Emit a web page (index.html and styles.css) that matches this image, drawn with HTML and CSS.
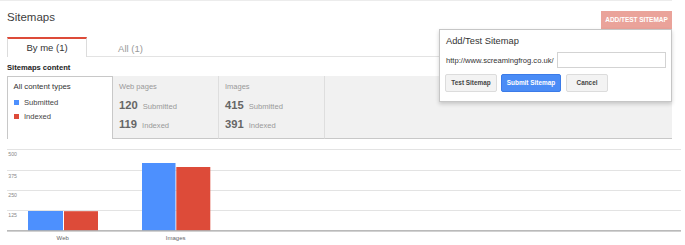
FILE: index.html
```html
<!DOCTYPE html>
<html>
<head>
<meta charset="utf-8">
<link rel="stylesheet" href="styles.css">
</head>
<body>
<div class="page">
  <div class="topline"></div>
  <div class="header">
    <div class="title">Sitemaps</div>
    <div class="add-btn">ADD/TEST SITEMAP</div>
  </div>
  <div class="tabs">
    <div class="tab active">By me (1)</div>
    <div class="tab">All (1)</div>
  </div>
  <div class="section-label">Sitemaps content</div>
  <div class="panel">
    <div class="cell cell-active">
      <div class="cell-label dark">All content types</div>
      <div class="legend"><span class="sq blue"></span>Submitted</div>
      <div class="legend"><span class="sq red"></span>Indexed</div>
    </div>
    <div class="cell cell-gray">
      <div class="cell-label">Web pages</div>
      <div class="stat first"><span class="num">120</span><span class="unit">Submitted</span></div>
      <div class="stat"><span class="num">119</span><span class="unit">Indexed</span></div>
    </div>
    <div class="cell cell-gray">
      <div class="cell-label">Images</div>
      <div class="stat first"><span class="num">415</span><span class="unit">Submitted</span></div>
      <div class="stat"><span class="num">391</span><span class="unit">Indexed</span></div>
    </div>
    <div class="cell-fill"></div>
  </div>
  <svg class="chart" width="685" height="105" viewBox="0 0 685 105">
    <g stroke="#e3e3e3" stroke-width="1">
      <line x1="7" y1="10.5" x2="681" y2="10.5"/>
      <line x1="7" y1="31.5" x2="681" y2="31.5"/>
      <line x1="7" y1="51.5" x2="681" y2="51.5"/>
      <line x1="7" y1="71.5" x2="681" y2="71.5"/>
    </g>
    <g class="axis-label">
      <text x="8.3" y="17.3">500</text>
      <text x="8.3" y="38.7">375</text>
      <text x="8.3" y="58.3">250</text>
      <text x="8.3" y="78.3">125</text>
    </g>
    <rect x="28" y="72" width="35" height="19.5" fill="#4d90fe"/>
    <rect x="64" y="72.2" width="34" height="19.3" fill="#dd4b39"/>
    <rect x="142" y="24" width="33.5" height="67.5" fill="#4d90fe"/>
    <rect x="176.3" y="28" width="34" height="63.5" fill="#dd4b39"/>
    <line x1="7" y1="91.9" x2="681" y2="91.9" stroke="#a3a3a3" stroke-width="1.4"/>
    <g class="cat-label">
      <text x="62.7" y="100.7" text-anchor="middle">Web</text>
      <text x="175.7" y="100.7" text-anchor="middle">Images</text>
    </g>
  </svg>

  <div class="popup">
    <div class="popup-title">Add/Test Sitemap</div>
    <div class="popup-row">
      <span class="url">http://www.screamingfrog.co.uk/</span>
      <input class="url-input" type="text">
    </div>
    <div class="popup-buttons">
      <div class="btn btn-gray btn-test">Test Sitemap</div>
      <div class="btn btn-blue">Submit Sitemap</div>
      <div class="btn btn-gray btn-cancel">Cancel</div>
    </div>
  </div>
</div>
</body>
</html>
```

FILE: styles.css
```css
* { box-sizing: border-box; }
html, body {
  margin: 0;
  padding: 0;
  background: #fff;
}
body {
  font-family: "Liberation Sans", Arial, sans-serif;
  color: #333;
  width: 685px;
  height: 245px;
  overflow: hidden;
}
.page {
  position: relative;
  width: 685px;
  height: 245px;
}
.topline {
  height: 1px;
  margin-right: 13px;
  background: #ececec;
}
.header {
  display: flex;
  justify-content: space-between;
  align-items: flex-start;
  padding: 9px 13px 0 7px;
  height: 28px;
}
.title {
  font-size: 11.5px;
  line-height: 14px;
  color: #404040;
}
.add-btn {
  margin-top: 1px;
  width: 71px;
  height: 18px;
  background: #eaa39a;
  color: #fff;
  font-weight: bold;
  font-size: 6.5px;
  line-height: 18px;
  text-align: center;
  letter-spacing: -0.05px;
}
.tabs {
  display: flex;
  margin: 8px 13px 0 7px;
  height: 20px;
  border-bottom: 1px solid #e3e3e3;
}
.tab {
  width: 87px;
  height: 19px;
  font-size: 9.5px;
  line-height: 19px;
  text-align: center;
  color: #999;
  border-top: 2px solid transparent;
}
.tab.active {
  width: 80px;
  height: 20px;
  margin-bottom: -1px;
  line-height: 17px;
  color: #333;
  background: #fff;
  border-top: 2px solid #dd4b39;
  border-left: 1px solid #dcdcdc;
  border-right: 1px solid #dcdcdc;
}
.section-label {
  margin: 5px 0 0 7px;
  height: 14px;
  font-size: 7.6px;
  line-height: 12px;
  font-weight: bold;
  color: #222;
}
.panel {
  display: flex;
  margin: 0 13px 0 7px;
  height: 63px;
}
.cell {
  width: 106px;
  height: 63px;
}
.cell-active {
  background: #fff;
  border: 1px solid #c8c8c8;
  border-bottom: none;
  padding: 5px 0 0 5.5px;
}
.cell-gray {
  width: 106px;
  background: #f1f1f1;
  border-right: 1px solid #dedede;
  border-bottom: 1px solid #c8c8c8;
  padding: 6px 0 0 6px;
}
.cell-gray:first-of-type { width: 105px; }
.cell-fill {
  flex: 1;
  height: 63px;
  background: #f1f1f1;
  border-bottom: 1px solid #c8c8c8;
}
.cell-label {
  font-size: 7.5px;
  line-height: 10px;
  color: #999;
  white-space: nowrap;
}
.cell-label.dark {
  font-size: 7.8px;
  color: #333;
}
.legend {
  display: flex;
  align-items: center;
  height: 14.5px;
  font-size: 7.6px;
  color: #444;
}
.legend:first-of-type { margin-top: 3px; }
.cell-active .legend:nth-child(2) { margin-top: 3px; }
.sq {
  width: 5px;
  height: 5px;
  margin-right: 5.5px;
}
.sq.blue { background: #4d90fe; }
.sq.red { background: #dd4b39; }
.stat {
  height: 19px;
  line-height: 19px;
  white-space: nowrap;
}
.stat.first { margin-top: 2px; }
.num {
  font-size: 11.2px;
  font-weight: bold;
  color: #666;
  margin-right: 5px;
}
.unit {
  font-size: 7.6px;
  color: #999;
}
.chart {
  display: block;
}
.axis-label text {
  font-family: "Liberation Sans", Arial, sans-serif;
  font-size: 5.2px;
  fill: #888;
}
.cat-label text {
  font-family: "Liberation Sans", Arial, sans-serif;
  font-size: 6px;
  fill: #666;
}
.popup {
  position: absolute;
  left: 439px;
  top: 29px;
  width: 233px;
  height: 73px;
  background: #fff;
  border: 1px solid #c6c6c6;
  box-shadow: 0 2px 4px rgba(0, 0, 0, 0.18);
  padding: 5px 5px 0 5px;
}
.popup-title {
  font-size: 9.3px;
  line-height: 13px;
  color: #333;
  margin-left: 1px;
}
.popup-row {
  display: flex;
  align-items: center;
  margin-top: 4px;
  height: 16px;
}
.url {
  font-size: 7.6px;
  color: #333;
  margin-left: 1px;
  white-space: nowrap;
}
.url-input {
  margin: 0 0 0 3px;
  width: 109px;
  height: 16px;
  border: 1px solid #d3d3d3;
  padding: 0;
  outline: none;
  background: #fff;
}
.popup-buttons {
  display: flex;
  margin-top: 6px;
  height: 18px;
}
.btn {
  height: 18px;
  font-size: 6.4px;
  font-weight: bold;
  line-height: 16px;
  text-align: center;
  border: 1px solid #dcdcdc;
  border-radius: 2px;
  white-space: nowrap;
}
.btn-gray {
  background: #f3f3f3;
  color: #444;
}
.btn-test { width: 52px; margin-right: 4px; }
.btn-blue {
  width: 60px;
  margin-right: 5px;
  background: #4a8cf6;
  border-color: #3b7be8;
  color: #fff;
}
.btn-cancel { width: 42px; }
```
